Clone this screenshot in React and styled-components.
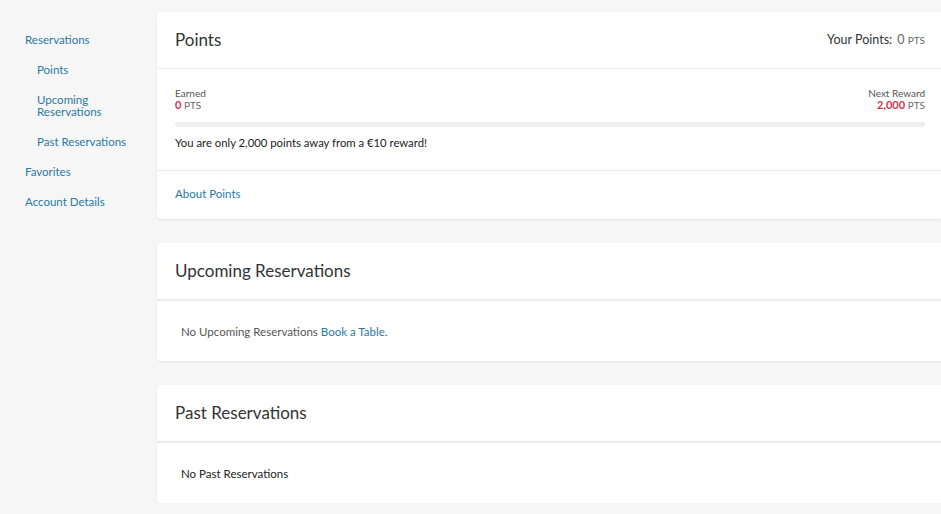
import React from "react";
import styled, { createGlobalStyle } from "styled-components";

const GlobalStyle = createGlobalStyle`
  html, body {
    margin: 0;
    padding: 0;
    background: #f6f6f6;
    font-family: "Lato", "Liberation Sans", sans-serif;
    color: #333;
  }
  * { box-sizing: border-box; }
`;

const navItems = [
  { label: "Reservations", sub: false },
  { label: "Points", sub: true },
  { label: "Upcoming Reservations", sub: true, wrap: true },
  { label: "Past Reservations", sub: true },
  { label: "Favorites", sub: false },
  { label: "Account Details", sub: false },
];

const Page = styled.div`
  display: flex;
  align-items: flex-start;
  width: 941px;
  overflow: hidden;
  padding-top: 12px;
`;

const Sidebar = styled.nav`
  width: 157px;
  flex-shrink: 0;
  display: flex;
  flex-direction: column;
  gap: 18px;
  padding: 22px 0 0 25px;
`;

const NavLink = styled.a`
  display: block;
  font-size: 11.5px;
  line-height: 12px;
  color: #2a7aa3;
  text-decoration: none;
  padding-left: ${(p) => (p.$sub ? "12px" : "0")};
  max-width: ${(p) => (p.$wrap ? "90px" : "none")};
`;

const Main = styled.main`
  flex: 1;
  display: flex;
  flex-direction: column;
  gap: 24px;
`;

const Card = styled.section`
  background: #fff;
  border-radius: 4px 0 0 4px;
  box-shadow: 0 1px 2px rgba(0, 0, 0, 0.08);
`;

const CardHeader = styled.header`
  display: flex;
  align-items: center;
  justify-content: space-between;
  height: ${(p) => (p.$thick ? "58px" : "57px")};
  padding: 0 16px 2px 18px;
  border-bottom: ${(p) => (p.$thick ? "2px solid #ececec" : "1px solid #ececec")};
`;

const Title = styled.h2`
  margin: 0;
  font-size: 17px;
  font-weight: 400;
  color: #333;
`;

const YourPoints = styled.div`
  font-size: 12.5px;
  color: #333;
  span {
    margin-left: 5px;
    color: #666;
  }
  small {
    font-size: 10px;
    color: #666;
  }
`;

const Section = styled.div`
  padding: 18px 16px 20px 18px;
  border-bottom: 1px solid #ececec;
`;

const LinkSection = styled.div`
  display: flex;
  align-items: center;
  height: 48px;
  padding: 0 18px 3px;
`;

const StatRow = styled.div`
  display: flex;
  justify-content: space-between;
`;

const Stat = styled.div`
  text-align: ${(p) => (p.$right ? "right" : "left")};
  font-size: 10px;
  line-height: 12px;
  color: #555;
`;

const StatValue = styled.div`
  font-size: 10px;
  color: #666;
  strong {
    font-size: 11px;
    font-weight: 700;
    color: #d6334f;
  }
`;

const Track = styled.div`
  height: 5px;
  border-radius: 3px;
  background: #eeeeee;
  margin: 11px 0 9px;
  overflow: hidden;
`;

const Fill = styled.div`
  height: 100%;
  background: #d6334f;
`;

const Message = styled.p`
  margin: 0;
  font-size: 11.3px;
  line-height: 14px;
  color: #222;
`;

const Link = styled.a`
  color: #2a7aa3;
  text-decoration: none;
  font-size: 11.5px;
`;

const Empty = styled.div`
  display: flex;
  align-items: center;
  height: 60px;
  padding: 0 24px;
  font-size: 11.5px;
  color: ${(p) => (p.$muted ? "#555" : "#222")};
`;

const earned = 0;
const target = 2000;

export default function App() {
  return (
    <>
      <GlobalStyle />
      <Page>
        <Sidebar>
          {navItems.map((item) => (
            <NavLink key={item.label} href="#" $sub={item.sub} $wrap={item.wrap}>
              {item.label}
            </NavLink>
          ))}
        </Sidebar>
        <Main>
          <Card>
            <CardHeader>
              <Title>Points</Title>
              <YourPoints>
                Your Points:<span>0 <small>PTS</small></span>
              </YourPoints>
            </CardHeader>
            <Section>
              <StatRow>
                <Stat>
                  Earned
                  <StatValue>
                    <strong>0</strong> PTS
                  </StatValue>
                </Stat>
                <Stat $right>
                  Next Reward
                  <StatValue>
                    <strong>2,000</strong> PTS
                  </StatValue>
                </Stat>
              </StatRow>
              <Track>
                <Fill style={{ width: `${(earned / target) * 100}%` }} />
              </Track>
              <Message>You are only 2,000 points away from a €10 reward!</Message>
            </Section>
            <LinkSection>
              <Link href="#">About Points</Link>
            </LinkSection>
          </Card>
          <Card>
            <CardHeader $thick>
              <Title>Upcoming Reservations</Title>
            </CardHeader>
            <Empty $muted>
              No Upcoming Reservations&nbsp;<Link href="#">Book a Table</Link>.
            </Empty>
          </Card>
          <Card>
            <CardHeader $thick>
              <Title>Past Reservations</Title>
            </CardHeader>
            <Empty>No Past Reservations</Empty>
          </Card>
        </Main>
      </Page>
    </>
  );
}
